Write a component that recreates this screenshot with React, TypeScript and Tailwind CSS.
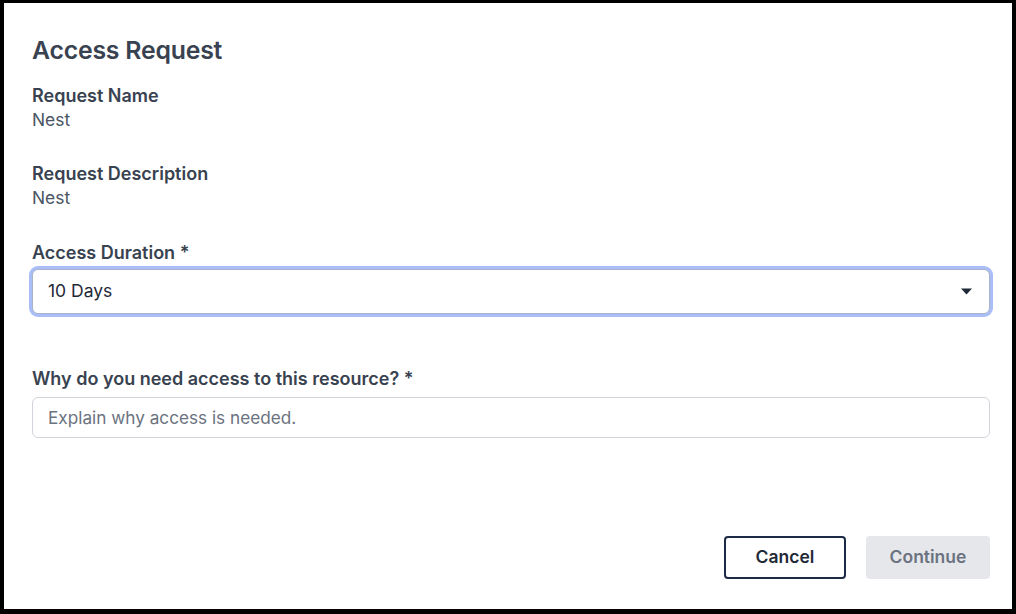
export default function App() {
  return (
    <div className="min-h-screen w-full bg-black pt-[3px] pl-[4px] pr-[4px] pb-[5px] font-['Inter','Liberation_Sans',sans-serif]">
      <div className="flex h-[606px] flex-col bg-white pl-[28px] pr-[22px] pt-[31px] pb-[30px]">
        <h1 className="text-[24.8px] leading-[32px] font-semibold text-[#394250] tracking-[-0.2px]">Access Request</h1>

        <div className="mt-[18px]">
          <div className="text-[18px] leading-[24px] font-semibold text-[#394250]">Request Name</div>
          <div className="text-[17.4px] leading-[23px] text-[#4b5563]">Nest</div>
        </div>

        <div className="mt-[31px]">
          <div className="text-[18px] leading-[24px] font-semibold text-[#394250]">Request Description</div>
          <div className="text-[17.4px] leading-[24px] text-[#4b5563]">Nest</div>
        </div>

        <div className="mt-[31px]">
          <div className="text-[18px] leading-[24px] font-semibold text-[#394250]">Access Duration *</div>
          <div className="mt-[4px] flex h-[45px] items-center justify-between rounded-[6px] border border-[#aab3c9] bg-white pl-[15px] pr-[17px] ring-[3px] ring-[#a9bdf6]">
            <span className="text-[17.5px] text-[#1f2937]">10 Days</span>
            <svg width="11" height="7" viewBox="0 0 11 7" className="fill-[#1f2937]">
              <path d="M0 0.5h11L5.5 6.5z" />
            </svg>
          </div>
        </div>

        <div className="mt-[53px]">
          <div className="text-[18px] leading-[24px] font-semibold text-[#394250]">Why do you need access to this resource? *</div>
          <div className="mt-[6px] flex h-[41px] items-center rounded-[6px] border border-[#d1d5db] bg-white px-[15px]">
            <span className="text-[17.2px] text-[#6b7280]">Explain why access is needed.</span>
          </div>
        </div>

        <div className="mt-auto flex justify-end gap-[20px]">
          <button className="h-[43px] w-[122px] rounded-[4px] border-2 border-[#1c2a45] bg-white text-[17.5px] font-semibold text-[#1f2937]">
            Cancel
          </button>
          <button className="h-[43px] w-[124px] rounded-[4px] bg-[#e5e7eb] text-[17.5px] font-semibold text-[#6b7280]">
            Continue
          </button>
        </div>
      </div>
    </div>
  )
}
